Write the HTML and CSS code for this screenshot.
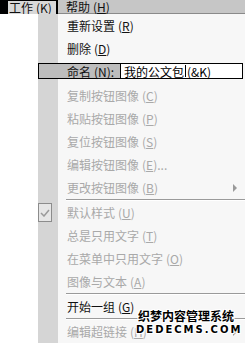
FILE: index.html
```html
<!DOCTYPE html>
<html>
<head>
<meta charset="utf-8">
<link rel="stylesheet" href="styles.css">
</head>
<body>
<div class="page">
  <div class="menubar">
    <div class="mb-item active">工作<span class="m">(<u>K</u>)</span></div>
    <div class="mb-item">帮助<span class="m">(<u>H</u>)</span></div>
  </div>
  <div class="below">
    <div class="blank"></div>
    <div class="menu">
      <div class="row"><div class="gut"></div><div class="lbl">重新设置<span class="m">(<u>R</u>)</span></div></div>
      <div class="row"><div class="gut"></div><div class="lbl">删除<span class="m">(<u>D</u>)</span></div></div>
      <div class="rename">
        <div class="rn-label">命名<span class="m">(<u>N</u>)</span>:</div>
        <div class="rn-input">我的公文包<span class="caret"></span>(&amp;K)</div>
      </div>
      <div class="row dis"><div class="gut"></div><div class="lbl">复制按钮图像<span class="m">(<u>C</u>)</span></div></div>
      <div class="row dis"><div class="gut"></div><div class="lbl">粘贴按钮图像<span class="m">(<u>P</u>)</span></div></div>
      <div class="row dis"><div class="gut"></div><div class="lbl">复位按钮图像<span class="m">(<u>S</u>)</span></div></div>
      <div class="row dis"><div class="gut"></div><div class="lbl">编辑按钮图像<span class="m">(<u>E</u>)</span>...</div></div>
      <div class="row dis"><div class="gut"></div><div class="lbl">更改按钮图像<span class="m">(<u>B</u>)</span><span class="arrow"></span></div></div>
      <div class="sep"><div class="gut"></div><div class="line"></div></div>
      <div class="row dis"><div class="gut"><div class="check"><svg width="10" height="8" viewBox="0 0 10 8"><path d="M1 4 L4 7 L9 1" fill="none" stroke="#9a9a9a" stroke-width="1.5"/></svg></div></div><div class="lbl">默认样式<span class="m">(<u>U</u>)</span></div></div>
      <div class="row dis"><div class="gut"></div><div class="lbl">总是只用文字<span class="m">(<u>T</u>)</span></div></div>
      <div class="row dis"><div class="gut"></div><div class="lbl">在菜单中只用文字<span class="m">(<u>O</u>)</span></div></div>
      <div class="row dis"><div class="gut"></div><div class="lbl">图像与文本<span class="m">(<u>A</u>)</span></div></div>
      <div class="sep"><div class="gut"></div><div class="line"></div></div>
      <div class="row"><div class="gut"></div><div class="lbl">开始一组<span class="m">(<u>G</u>)</span></div></div>
      <div class="sep"><div class="gut"></div><div class="line"></div></div>
      <div class="row dis"><div class="gut"></div><div class="lbl">编辑超链接<span class="m">(<u>H</u>)</span><span class="arrow"></span></div></div>
    </div>
  </div>
  <div class="watermark">
    <div class="wm1">织梦内容管理系统</div>
    <div class="wm2">DEDECMS.COM</div>
  </div>
</div>
</body>
</html>
```
FILE: styles.css
```css
html, body {
  margin: 0;
  padding: 0;
  background: #ffffff;
}
.page {
  position: relative;
  width: 245px;
  height: 344px;
  overflow: hidden;
  font-family: "Noto Sans CJK SC", "DejaVu Sans", sans-serif;
  font-size: 12px;
  color: #111;
}
.m {
  margin-left: 3px;
}
.menubar {
  display: flex;
  height: 13px;
  background: #c6c6c6;
  border-bottom: 1px solid #8a8a8a;
}
.mb-item {
  height: 13px;
  padding: 0 8px 0 6px;
  line-height: 14px;
  font-size: 12px;
  white-space: nowrap;
}
.mb-item.active {
  width: 46px;
  box-sizing: border-box;
  background: #d8d8d8;
  border-left: 8px solid #000;
  border-top: 1px solid #000;
  border-right: 2px solid #000;
  height: 14px;
  line-height: 13px;
  padding: 0 0 0 1px;
  margin-right: 2px;
  width: 58px;
}
u {
  text-decoration: underline;
  text-underline-offset: 1px;
}
.below {
  display: flex;
}
.blank {
  width: 38px;
  flex: none;
}
.menu {
  width: 207px;
  flex: none;
  display: flex;
  flex-direction: column;
  background: #f7f7f7;
}
.row {
  display: flex;
  height: 23px;
}
.gut {
  width: 20px;
  flex: none;
  background: #d5d5d5;
}
.lbl {
  flex: 1;
  display: flex;
  align-items: center;
  padding-left: 9px;
  white-space: nowrap;
  position: relative;
}
.dis .lbl {
  color: #a9a9a9;
}
.rename {
  display: flex;
  height: 24px;
  padding-top: 3px;
  box-sizing: border-box;
  background: linear-gradient(to right, #d5d5d5 20px, #f7f7f7 20px);
}
.rn-label {
  width: 82px;
  height: 16px;
  box-sizing: border-box;
  border: 1px solid #000;
  border-right: none;
  background: #bdbdbd;
  display: flex;
  align-items: center;
  padding-left: 28px;
  white-space: nowrap;
}
.rn-input {
  width: 123px;
  height: 16px;
  box-sizing: border-box;
  border: 1px solid #000;
  background: #fff;
  display: flex;
  align-items: center;
  padding-left: 3px;
  white-space: nowrap;
  color: #000;
}
.caret {
  display: inline-block;
  width: 1px;
  height: 12px;
  background: #000;
  margin: 0 1px;
}
.sep {
  display: flex;
  height: 2px;
}
.sep .line {
  flex: 1;
  margin-left: 8px;
  border-top: 1px solid #9a9a9a;
  background: #fff;
}
.arrow {
  position: absolute;
  left: 175px;
  top: 8px;
  width: 0;
  height: 0;
  border-top: 4px solid transparent;
  border-bottom: 4px solid transparent;
  border-left: 4px solid #9a9a9a;
}
.check {
  width: 14px;
  height: 19px;
  box-sizing: border-box;
  margin-top: 2px;
  border: 1px solid #8c8c8c;
  background: #e6e6e6;
  display: flex;
  align-items: center;
  justify-content: center;
}
.watermark {
  position: absolute;
  left: 136px;
  top: 309px;
  width: 100px;
  text-align: center;
  color: #000;
  font-weight: bold;
  text-shadow: 1px 0 #fff, -1px 0 #fff, 0 1px #fff, 0 -1px #fff, 1px 1px #fff, -1px -1px #fff, 1px -1px #fff, -1px 1px #fff;
}
.wm1 {
  font-size: 12px;
  line-height: 14px;
  height: 15px;
}
.wm2 {
  font-family: "DejaVu Sans", sans-serif;
  font-size: 10px;
  line-height: 12px;
  letter-spacing: 2px;
}
```
